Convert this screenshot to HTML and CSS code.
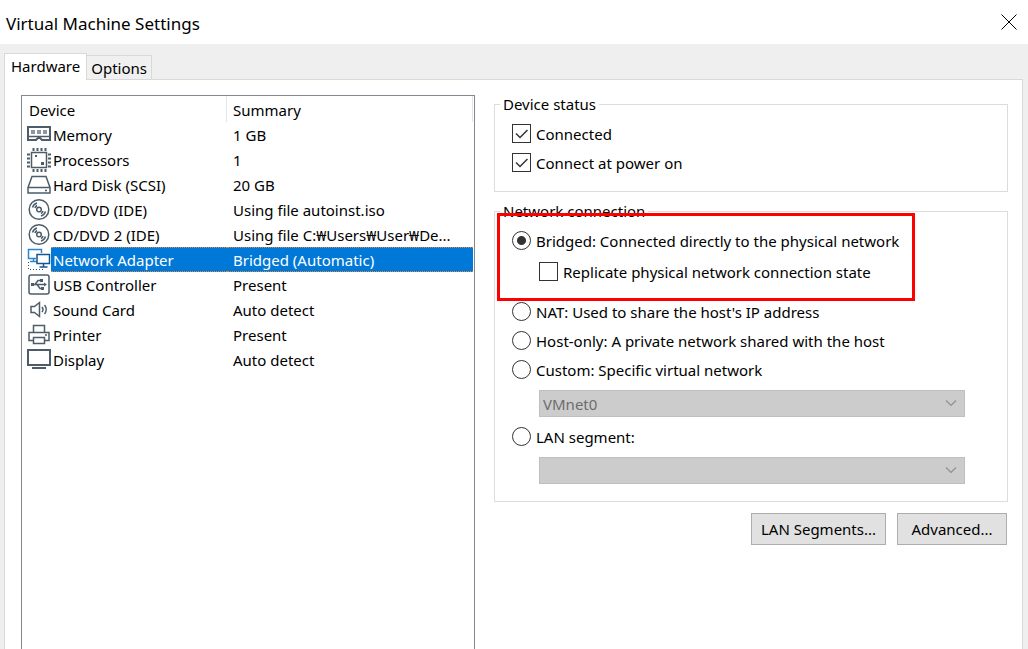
FILE: index.html
```html
<!DOCTYPE html>
<html lang="en">

<head>
    <meta charset="utf-8">
    <title>Virtual Machine Settings</title>
    <link rel="stylesheet" href="styles.css">
</head>

<body>
    <header class="titlebar">
        <h1>Virtual Machine Settings</h1>
        <button class="close" type="button" aria-label="Close">
            <svg width="16" height="16" viewBox="0 0 16 16"><path d="M.5.5l15 15M15.5.5l-15 15"/></svg>
        </button>
    </header>
    <div class="tabs" role="tablist">
        <button class="tab active" type="button" role="tab" aria-selected="true">Hardware</button>
        <button class="tab" type="button" role="tab" aria-selected="false">Options</button>
    </div>
    <main class="panel">
        <div class="list">
            <table class="devices">
                <colgroup>
                    <col class="col-icon">
                    <col class="col-name">
                    <col>
                </colgroup>
                <thead>
                    <tr>
                        <th colspan="2">Device</th>
                        <th class="summary">Summary</th>
                    </tr>
                </thead>
                <tbody>
                    <tr>
                        <td><svg class="icon" viewBox="0 0 24 24"><path class="thick" d="M1 4h22v13h-8l-2-2h-2l-2 2H1z"/><path d="M1 13.500h22"/><path class="ram" d="M4 7h4v4H4zM10 7h4v4h-4zM16 7h4v4h-4z"/></svg></td>
                        <td>Memory</td>
                        <td class="summary">1 GB</td>
                    </tr>
                    <tr>
                        <td><svg class="icon" viewBox="0 0 24 24"><path d="M4.500 4.500h15v15h-15z"/><path class="thick" d="M6.500 0v3M10.500 0v3M14.500 0v3M18.500 0v3M6.500 21v3M10.500 21v3M14.500 21v3M18.500 21v3M0 6.500h3M0 10.500h3M0 14.500h3M0 18.500h3M21 6.500h3M21 10.500h3M21 14.500h3M21 18.500h3"/><path class="fill" d="M8 7h2v2H8zM14 14h3v3h-3z"/></svg></td>
                        <td>Processors</td>
                        <td class="summary">1</td>
                    </tr>
                    <tr>
                        <td><svg class="icon" viewBox="0 0 24 24"><path d="M1 14.500L5 3.500h14l4 11v5.500H1zM1 14.500h22M18 17.500h2"/></svg></td>
                        <td>Hard Disk (SCSI)</td>
                        <td class="summary">20 GB</td>
                    </tr>
                    <tr>
                        <td><svg class="icon" viewBox="0 0 24 24"><circle cx="12" cy="11.500" r="9.800"/><circle cx="12" cy="11.500" r="2.300"/><path d="M5.500 9.500a7 7 0 0 1 4.500-4.500M8 10a4.500 4.500 0 0 1 2-2.500M18.500 13.500a7 7 0 0 1-4.500 4.500M16 13a4.500 4.500 0 0 1-2 2.500"/></svg></td>
                        <td>CD/DVD (IDE)</td>
                        <td class="summary">Using file autoinst.iso</td>
                    </tr>
                    <tr>
                        <td><svg class="icon" viewBox="0 0 24 24"><circle cx="12" cy="11.500" r="9.800"/><circle cx="12" cy="11.500" r="2.300"/><path d="M5.500 9.500a7 7 0 0 1 4.500-4.500M8 10a4.500 4.500 0 0 1 2-2.500M18.500 13.500a7 7 0 0 1-4.500 4.500M16 13a4.500 4.500 0 0 1-2 2.500"/></svg></td>
                        <td>CD/DVD 2 (IDE)</td>
                        <td class="summary">Using file C:₩Users₩User₩De...</td>
                    </tr>
                    <tr class="selected">
                        <td><svg class="icon" viewBox="0 0 24 24"><path class="blue" d="M9 10.500H1.500v-9h13V5M3 13.500h7M6.500 10.500v3"/><path class="navy" d="M10 6.500h12.500v9H10zM16.500 15.500v3M12.500 19h8"/><path class="dots" d="M1.500 14v7.500H17"/></svg></td>
                        <td>Network Adapter</td>
                        <td class="summary">Bridged (Automatic)</td>
                    </tr>
                    <tr>
                        <td><svg class="icon" viewBox="0 0 24 24"><rect x="2" y="2" width="20" height="19" rx="2"/><path d="M5 11.500h13M8 11.500l3-4h2M10 11.500l3 4h2"/><path class="fill" d="M4 10h3v3H4zM13 6h3v3h-3zM14 14h3v3h-3zM17 9.500l3 2-3 2z"/></svg></td>
                        <td>USB Controller</td>
                        <td class="summary">Present</td>
                    </tr>
                    <tr>
                        <td><svg class="icon" viewBox="0 0 24 24"><path d="M4 8.500h3.500l5-4v14l-5-4H4z"/><path d="M15 9q2 2.500 0 5M17.500 7q3.500 4.500 0 9"/></svg></td>
                        <td>Sound Card</td>
                        <td class="summary">Auto detect</td>
                    </tr>
                    <tr>
                        <td><svg class="icon" viewBox="0 0 24 24"><path d="M6.500 9V2.500h11V9M6 17.500H2V9.500h20v8h-4M6.500 14.500h11v6h-11zM18 12h2"/></svg></td>
                        <td>Printer</td>
                        <td class="summary">Present</td>
                    </tr>
                    <tr>
                        <td><svg class="icon" viewBox="0 0 24 24"><path class="thick" d="M1 2h22v15H1zM5 20h14"/></svg></td>
                        <td>Display</td>
                        <td class="summary">Auto detect</td>
                    </tr>
                </tbody>
            </table>
        </div>
        <form class="settings">
            <fieldset>
                <legend>Device status</legend>
                <div class="options status">
                    <label><input type="checkbox" checked>Connected</label>
                    <label><input type="checkbox" checked>Connect at power on</label>
                </div>
            </fieldset>
            <fieldset>
                <legend>Network connection</legend>
                <div class="options network">
                    <label><input type="radio" name="net" checked>Bridged: Connected directly to the physical network</label>
                    <label class="sub"><input type="checkbox">Replicate physical network connection state</label>
                    <label><input type="radio" name="net">NAT: Used to share the host's IP address</label>
                    <label><input type="radio" name="net">Host-only: A private network shared with the host</label>
                    <label><input type="radio" name="net">Custom: Specific virtual network</label>
                    <select aria-label="Virtual network" disabled>
                        <option>VMnet0</option>
                    </select>
                    <label><input type="radio" name="net">LAN segment:</label>
                    <select aria-label="LAN segment" disabled>
                        <option></option>
                    </select>
                </div>
                <div class="highlight"></div>
            </fieldset>
            <div class="buttons">
                <button class="btn wide" type="button">LAN Segments...</button>
                <button class="btn" type="button">Advanced...</button>
            </div>
        </form>
    </main>
</body>

</html>
```

FILE: styles.css
```css
* {
    box-sizing: border-box;
}

body {
    display: flex;
    flex-direction: column;
    min-height: 100vh;
    margin: 0;
    background: #efefef;
    color: #000;
    font: 15px/20px "Noto Sans", "Noto Sans CJK KR", sans-serif;
}

button,
select {
    font: inherit;
    color: inherit;
}

.titlebar {
    display: flex;
    align-items: center;
    justify-content: space-between;
    height: 44px;
    padding: 0 11px 0 6px;
    background: #fff;
}

.titlebar h1 {
    margin: 0;
    padding-top: 3px;
    font-size: 17px;
    font-weight: 400;
}

.close {
    display: flex;
    padding: 0;
    border: 0;
    background: none;
}

.close path {
    stroke: #000;
}

/* tabs */
.tabs {
    display: flex;
    align-items: flex-end;
    height: 35px;
    padding-left: 4px;
}

.tab {
    height: 24px;
    padding: 0 4px;
    border: 1px solid #d9d9d9;
    border-width: 1px 1px 0 0;
    background: #f0f0f0;
}

.tab.active {
    position: relative;
    height: 27px;
    margin-bottom: -1px;
    padding: 0 6px 2px;
    border-left-width: 1px;
    background: #fff;
}

.panel {
    flex: 1;
    display: grid;
    grid-template-columns: 454fr 514fr;
    gap: 19px;
    margin: 0 5px 0 4px;
    padding: 15px 14px 0 16px;
    border: 1px solid #d9d9d9;
    border-bottom: 0;
    background: #fff;
}

/* device list */
.list {
    padding-right: 1px;
    border: 1px solid #828790;
    border-bottom: 0;
}

.devices {
    width: 100%;
    border-collapse: separate;
    border-spacing: 0;
    table-layout: fixed;
}

.col-icon {
    width: 29px;
}

.col-name {
    width: 176px;
}

.devices th {
    height: 26px;
    padding: 2px 7px 0;
    border-right: 1px solid #e5e5e5;
    font-weight: 400;
    text-align: left;
}

.devices td {
    height: 25px;
    padding: 0 0 0 2px;
    white-space: nowrap;
}

.devices td:first-child {
    padding-left: 5px;
}

.devices .summary {
    padding-left: 6px;
}

.selected td:not(:first-child) {
    background: #0078d7;
    color: #fff;
    border: 1px dotted #e0883a;
    border-width: 1px 0;
}

.icon {
    display: block;
    width: 24px;
    height: 24px;
    fill: none;
    stroke: #4c5d69;
    stroke-width: 1.5;
}

.icon .thick {
    stroke-width: 2;
}

.icon .ram {
    fill: #8d989f;
    stroke: none;
}

.icon .fill {
    fill: #4c5d69;
    stroke: none;
}

.icon .blue {
    stroke: #2b86cf;
}

.icon .navy {
    stroke: #17568c;
}

.icon .dots {
    stroke: #17568c;
    stroke-width: 1;
    stroke-dasharray: 1 2;
}

/* settings */
fieldset {
    position: relative;
    min-width: 0;
    margin: 0 0 10px;
    padding: 0;
    border: 1px solid #dcdcdc;
}

legend {
    margin-left: 5px;
    padding: 0 3px;
    line-height: 19px;
}

.options {
    display: flex;
    flex-direction: column;
    padding: 5px 42px 12px 17px;
}

.status {
    padding-bottom: 14px;
}

.options label {
    display: flex;
    align-items: center;
    gap: 5px;
    height: 29px;
    white-space: nowrap;
}

.options .sub {
    margin: 2px 0 11px 27px;
}

input {
    appearance: none;
    flex: none;
    width: 19px;
    height: 19px;
    margin: 0;
    border: 1px solid #333;
    background: #fff center no-repeat;
}

input[type="radio"] {
    border-radius: 50%;
}

input[type="radio"]:checked {
    background-image: radial-gradient(circle, #333 4px, transparent 5px);
}

input[type="checkbox"]:checked {
    background-image: url("data:image/svg+xml,%3Csvg xmlns='http://www.w3.org/2000/svg' width='17' height='17'%3E%3Cpath d='M3 8.500l4 4 7.500-7.500' fill='none' stroke='%23333' stroke-width='1.500'/%3E%3C/svg%3E");
}

select {
    appearance: none;
    height: 27px;
    margin: 6px 0 5px 27px;
    padding: 0 3px;
    border: 1px solid #bfbfbf;
    border-radius: 0;
    background: #ccc right 7px center no-repeat url("data:image/svg+xml,%3Csvg xmlns='http://www.w3.org/2000/svg' width='12' height='7'%3E%3Cpath d='M1 .5l5 5 5-5' fill='none' stroke='%23909090' stroke-width='1.200'/%3E%3C/svg%3E");
}

select:disabled {
    color: #6d6d6d;
    opacity: 1;
}

/* red frame round the bridged options */
.highlight {
    position: absolute;
    top: -8px;
    left: 2px;
    width: 418px;
    height: 88px;
    border: 3px solid #f00;
    pointer-events: none;
}

.buttons {
    display: flex;
    justify-content: flex-end;
    gap: 11px;
    padding: 1px 1px 0 0;
}

.btn {
    width: 110px;
    height: 32px;
    padding: 0;
    border: 1px solid #adadad;
    background: #e1e1e1;
}

.btn.wide {
    width: 135px;
}
```
